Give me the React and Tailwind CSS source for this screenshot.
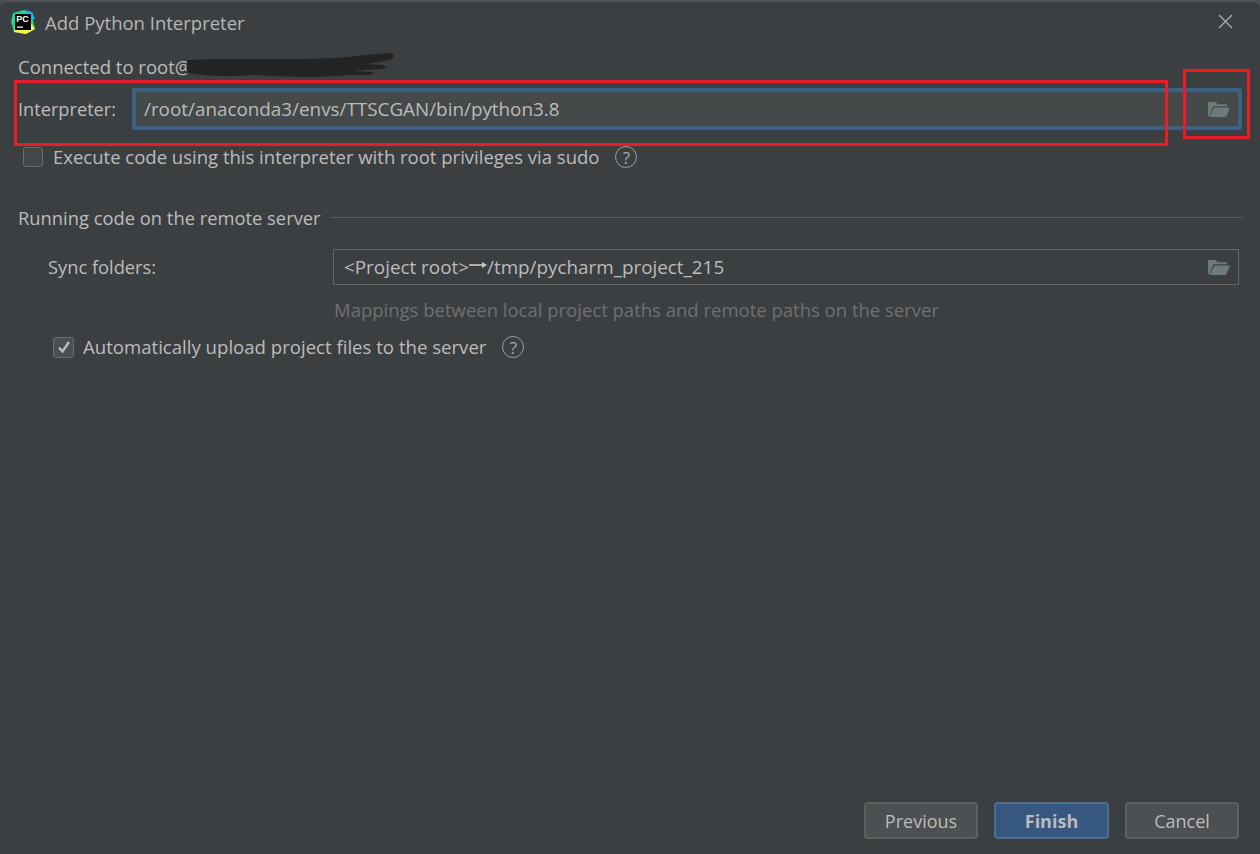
import React from "react";

const Folder = ({ className }) => (
  <svg viewBox="0 0 24 20" className={className}>
    <path d="M1 2h8l2 2.5h10v2H6.5L2.5 17H1z" fill="#6e7a7e" />
    <path d="M7.5 8H24l-4 10H2.8z" fill="#6e7a7e" />
  </svg>
);

const Help = () => (
  <span className="w-[22px] h-[22px] rounded-full border-[1.5px] border-[#9a9d9f] text-[#a5a8aa] text-[17px] leading-none flex items-center justify-center">?</span>
);

const Logo = () => (
  <svg viewBox="0 0 26 26" className="w-[26px] h-[26px] mt-[-3px]">
    <path d="M3 4 L14 1 L22 6 L25 20 L16 25 L4 23 L1 13 Z" fill="#21d789" />
    <path d="M14 1 L22 3 L25 10 L19 11 Z" fill="#07c3f2" />
    <path d="M5 18 L4 23 L16 25 L25 20 L21 14 Z" fill="#fcf84a" />
    <rect x="5" y="5" width="16" height="16" fill="#000" />
    <text x="6.2" y="13" fontSize="9" fontWeight="700" fill="#fff" fontFamily="'Liberation Sans', sans-serif">PC</text>
    <rect x="7" y="17.5" width="6" height="1.2" fill="#fff" />
  </svg>
);

const Button = ({ children, primary, className }) => (
  <button
    className={
      "h-[37px] rounded-[4px] border-2 text-[18px] flex items-center justify-center " +
      className + " " +
      (primary
        ? "bg-[#365880] border-[#4c708c] text-[#bbbbbb] font-bold"
        : "bg-[#4c5052] border-[#5e6060] text-[#bbbbbb]")
    }
  >
    {children}
  </button>
);

export default function App() {
  return (
    <div className="bg-[#4a4d4f] w-[1260px] h-[854px]">
      <div className="relative w-[1260px] h-[854px] bg-[#3c3f41] text-[#bbbbbb] text-[18.5px] leading-[24px] flex flex-col overflow-hidden border-t-2 border-[#505355] rounded-t-[8px] font-['Open_Sans','Noto_Sans',sans-serif]">
        <header className="h-[42px] flex items-center pl-[10px] pr-[27px] shrink-0">
          <Logo />
          <span className="ml-[9px] text-[#b4b6b8] text-[18.5px]">Add Python Interpreter</span>
          <svg viewBox="0 0 15 15" className="w-[15px] h-[15px] ml-auto mt-[-3px]" stroke="#a9abad" strokeWidth="1.4" fill="none">
            <path d="M1 1l13 13M14 1L1 14" />
          </svg>
        </header>

        <main className="flex-1 flex flex-col pl-[18px] pr-[17px]">
          <div className="mt-[11px] h-[24px] flex items-center relative">
            <span>Connected to root@</span>
            <svg viewBox="0 0 210 26" className="absolute left-[169px] top-[-2px] w-[210px] h-[26px]">
              <path d="M0 7 C40 5 100 7 150 5 L200 0 C209 0 209 6 198 8 L180 11 L196 12 C201 14 200 16 190 16 L165 18 L186 19 C188 22 180 23 165 22 C130 25 90 24 70 22 C40 24 10 23 0 19 Z" fill="#232323" />
            </svg>
          </div>

          <div className="mt-[9px] flex items-center h-[42px]">
            <span className="w-[114px] mt-[-1px] text-[18.2px]">Interpreter:</span>
            <div className="flex-1 h-[42px] mr-[1px] border-[4px] border-[#3d6185] rounded-[3px] bg-[#45494a] flex items-center pl-[8px] pr-[8px]">
              <span className="text-[18.85px] mt-[-1px]">/root/anaconda3/envs/TTSCGAN/bin/python3.8</span>
              <Folder className="ml-auto w-[23px] h-[19px]" />
            </div>
          </div>

          <div className="mt-[15px] h-[24px] flex items-center pl-[5px]">
            <span className="w-[20px] h-[20px] rounded-[3px] border-[1.5px] border-[#6b6b6b] bg-[#43494a]" />
            <span className="ml-[10px]">Execute code using this interpreter with root privileges via sudo</span>
            <span className="ml-[16px]"><Help /></span>
          </div>

          <div className="mt-[37px] h-[24px] flex items-center">
            <span className="text-[18.35px]">Running code on the remote server</span>
            <div className="flex-1 h-px bg-[#5a5c5e] ml-[9px] mt-[-2px]" />
          </div>

          <div className="mt-[19px] flex items-center h-[36px] pl-[30px]">
            <span className="w-[285px] text-[18.3px] mt-[-1px]">Sync folders:</span>
            <div className="flex-1 h-[36px] mr-[4px] border border-[#646464] bg-[#3c3f41] flex items-center pl-[10px] pr-[8px]">
              <span className="text-[18.85px] mt-[-1px]">&lt;Project root&gt;</span>
              <svg viewBox="0 0 18 10" className="w-[18px] h-[10px] mt-[-4px]"><path d="M0 5h15" stroke="#c9c9c9" strokeWidth="1.6" /><path d="M13 2l5 3-5 3z" fill="#c9c9c9" /></svg>
              <span className="text-[18.85px] mt-[-1px]">/tmp/pycharm_project_215</span>
              <Folder className="ml-auto w-[23px] h-[19px]" />
            </div>
          </div>

          <div className="mt-[13px] pl-[316px] h-[24px] text-[#6e7072] flex items-center">Mappings between local project paths and remote paths on the server</div>

          <div className="mt-[13px] h-[24px] flex items-center pl-[35px]">
            <span className="w-[21px] h-[21px] rounded-[3px] border-[1.5px] border-[#6b6b6b] bg-[#4a4f51] flex items-center justify-center">
              <svg viewBox="0 0 14 14" className="w-[14px] h-[14px]" fill="none" stroke="#b8babb" strokeWidth="2.4"><path d="M2 7.5l3.5 4L12 2" /></svg>
            </span>
            <span className="ml-[9px] text-[18.6px]">Automatically upload project files to the server</span>
            <span className="ml-[16px]"><Help /></span>
          </div>

          <footer className="mt-auto mb-[15px] flex justify-end gap-[16px] pr-[4px]">
            <Button className="w-[114px]">Previous</Button>
            <Button primary className="w-[115px]">Finish</Button>
            <Button className="w-[114px]">Cancel</Button>
          </footer>
        </main>

        <div className="absolute left-[14px] top-[78px] w-[1154px] h-[66px] border-[3px] border-[#ed1c24] pointer-events-none" />
        <div className="absolute left-[1183px] top-[67px] w-[67px] h-[70px] border-[3px] border-[#ed1c24] pointer-events-none" />
      </div>
    </div>
  );
}
